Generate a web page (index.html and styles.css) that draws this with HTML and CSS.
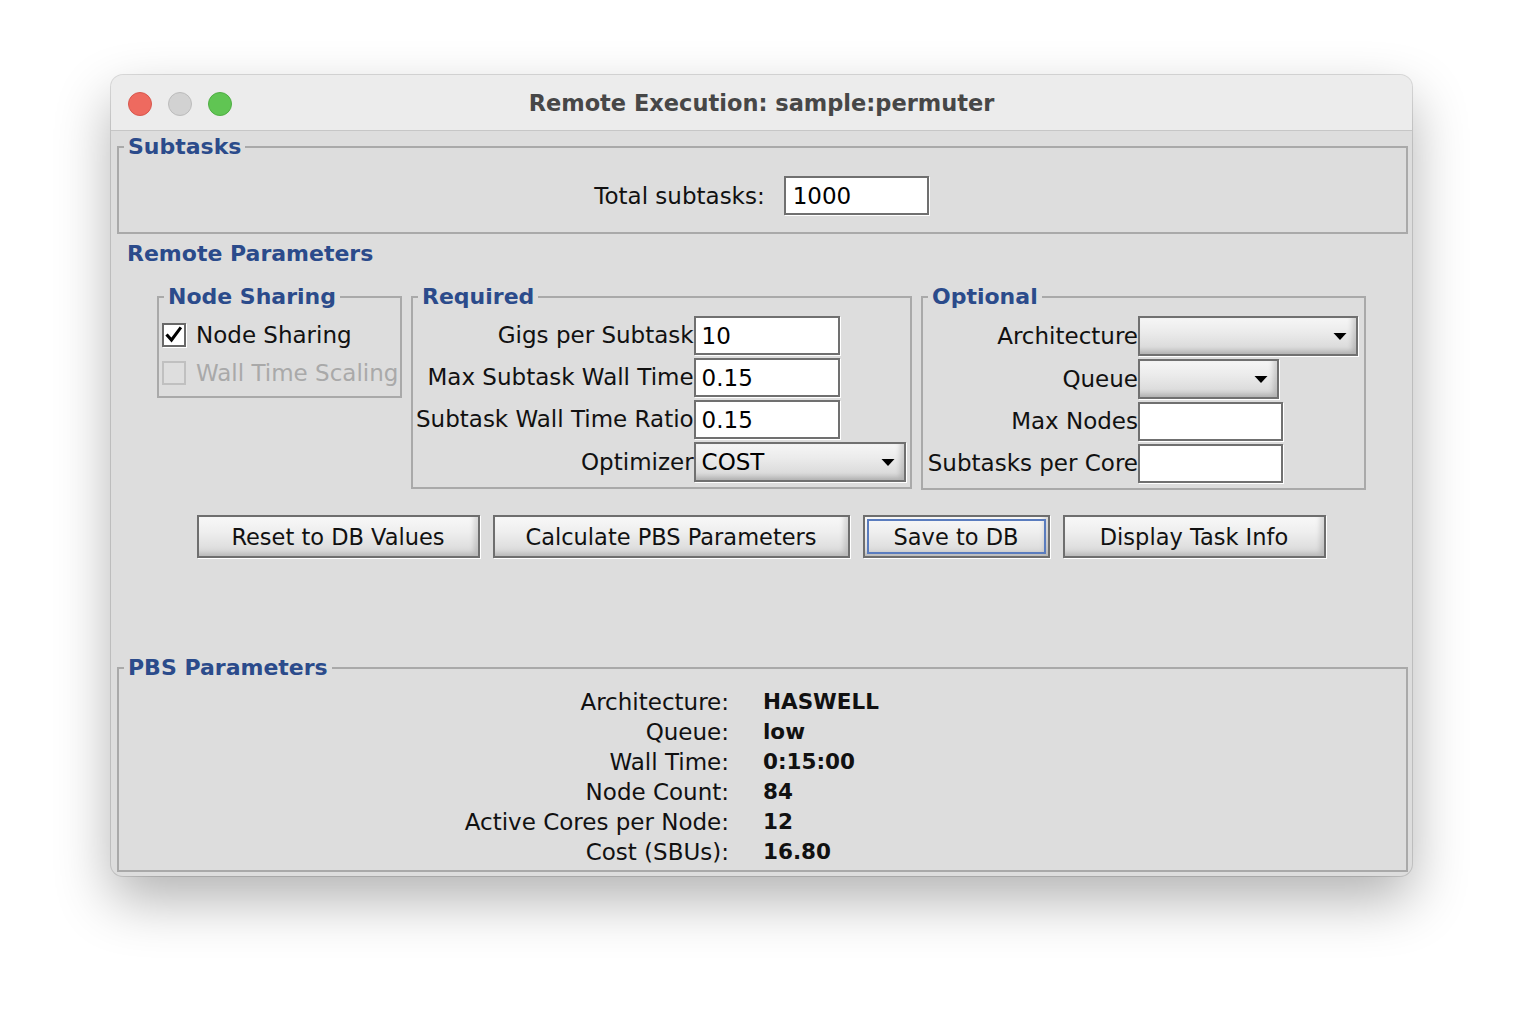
FILE: index.html
```html
<!DOCTYPE html>
<html>
<head>
<meta charset="utf-8">
<title>Remote Execution: sample:permuter</title>
<link rel="stylesheet" href="styles.css">
</head>
<body>
<div class="window">
  <div class="titlebar">
    <div class="lights">
      <span class="light red"></span>
      <span class="light gray"></span>
      <span class="light green"></span>
    </div>
    <div class="title">Remote Execution: sample:permuter</div>
    <div></div>
  </div>
  <div class="content">
    <fieldset class="group subtasks">
      <legend>Subtasks</legend>
      <div class="total-row">
        <span class="lbl">Total subtasks:</span>
        <div class="field total-field">1000</div>
      </div>
    </fieldset>

    <div class="section-title">Remote Parameters</div>

    <div class="param-row">
      <fieldset class="group inner node-sharing">
        <legend>Node Sharing</legend>
        <div class="check-row">
          <span class="cb checked">
            <svg width="20" height="20" viewBox="0 0 20 20"><path d="M3.5 10.5 L7.5 15 L16 3.5" fill="none" stroke="#000" stroke-width="3" stroke-linejoin="miter" stroke-linecap="square"/></svg>
          </span>
          <span class="lbl">Node Sharing</span>
        </div>
        <div class="check-row disabled">
          <span class="cb off"></span>
          <span class="lbl">Wall Time Scaling</span>
        </div>
      </fieldset>

      <fieldset class="group inner required">
        <legend>Required</legend>
        <div class="form-grid req-grid">
          <span class="flabel">Gigs per Subtask</span>
          <div class="field w146">10</div>
          <span class="flabel">Max Subtask Wall Time</span>
          <div class="field w146">0.15</div>
          <span class="flabel">Subtask Wall Time Ratio</span>
          <div class="field w146">0.15</div>
          <span class="flabel">Optimizer</span>
          <div class="combo w212"><span class="combo-text">COST</span><svg class="arrow" width="14" height="7" viewBox="0 0 14 7"><path d="M0.5 0 H13.5 L7 7 Z" fill="#000"/></svg></div>
        </div>
      </fieldset>

      <fieldset class="group inner optional">
        <legend>Optional</legend>
        <div class="form-grid opt-grid">
          <span class="flabel">Architecture</span>
          <div class="combo w220"><span class="combo-text"></span><svg class="arrow" width="14" height="7" viewBox="0 0 14 7"><path d="M0.5 0 H13.5 L7 7 Z" fill="#000"/></svg></div>
          <span class="flabel">Queue</span>
          <div class="combo w141"><span class="combo-text"></span><svg class="arrow" width="14" height="7" viewBox="0 0 14 7"><path d="M0.5 0 H13.5 L7 7 Z" fill="#000"/></svg></div>
          <span class="flabel">Max Nodes</span>
          <div class="field w145"></div>
          <span class="flabel">Subtasks per Core</span>
          <div class="field w145"></div>
        </div>
      </fieldset>
    </div>

    <div class="buttons">
      <button class="btn b-reset">Reset to DB Values</button>
      <button class="btn b-calc">Calculate PBS Parameters</button>
      <button class="btn b-save focused">Save to DB</button>
      <button class="btn b-info">Display Task Info</button>
    </div>

    <fieldset class="group pbs">
      <legend>PBS Parameters</legend>
      <div class="pbs-grid">
        <span class="plabel">Architecture:</span><span class="pval">HASWELL</span>
        <span class="plabel">Queue:</span><span class="pval">low</span>
        <span class="plabel">Wall Time:</span><span class="pval">0:15:00</span>
        <span class="plabel">Node Count:</span><span class="pval">84</span>
        <span class="plabel">Active Cores per Node:</span><span class="pval">12</span>
        <span class="plabel">Cost (SBUs):</span><span class="pval">16.80</span>
      </div>
    </fieldset>
  </div>
</div>
</body>
</html>
```

FILE: styles.css
```css
html, body {
  margin: 0;
  padding: 0;
  background: #ffffff;
}

body {
  min-height: 1024px;
  padding-top: 75px;
  box-sizing: border-box;
  font-family: "DejaVu Sans", "Noto Sans", sans-serif;
  color: #111;
}

.window {
  width: 1301px;
  height: 801px;
  margin: 0 0 0 111px;
  border-radius: 12px;
  overflow: hidden;
  background: #dddddd;
  box-shadow: 0 24px 55px rgba(0, 0, 0, 0.3), 0 0 0 1px rgba(0, 0, 0, 0.13);
  display: flex;
  flex-direction: column;
}

/* ---------- title bar ---------- */
.titlebar {
  height: 55px;
  flex: none;
  background: #ececec;
  border-bottom: 1px solid #c6c6c6;
  display: grid;
  grid-template-columns: 1fr auto 1fr;
  align-items: center;
}

.lights {
  display: flex;
  gap: 16px;
  padding-left: 17px;
  padding-top: 2px;
}

.light {
  width: 24px;
  height: 24px;
  border-radius: 50%;
  box-sizing: border-box;
}

.light.red {
  background: #ee6a5f;
  border: 1px solid #d8574d;
}

.light.gray {
  background: #d2d2d2;
  border: 1px solid #bcbcbc;
}

.light.green {
  background: #60c553;
  border: 1px solid #4fae43;
}

.title {
  font-weight: bold;
  font-size: 22.5px;
  color: #474747;
}

/* ---------- content ---------- */
.content {
  padding: 3px 4px 0 6px;
}

fieldset.group {
  margin: 0;
  padding: 0;
  min-width: 0;
  border: 2px solid #a9a9a9;
  box-sizing: border-box;
}

fieldset.group > legend {
  margin-left: 5px;
  padding: 0 4px;
  font-weight: bold;
  font-size: 22px;
  line-height: 26px;
  color: #2b4b8b;
}

fieldset.group.inner > legend {
  margin-left: 2px;
}

.lbl, .flabel, .plabel {
  font-size: 23px;
  color: #111;
  white-space: nowrap;
}

.field {
  height: 39px;
  box-sizing: border-box;
  border: 2px solid #707070;
  background: #ffffff;
  box-shadow: 1px 1px 0 #ffffff;
  font-size: 23px;
  padding-left: 6px;
  display: flex;
  align-items: center;
  color: #000;
}

/* subtasks */
.subtasks {
  padding: 16px 0 17px 0 !important;
}

.total-row {
  display: flex;
  justify-content: center;
  align-items: center;
  gap: 19px;
  padding-right: 2px;
}

.total-field {
  width: 145px;
  padding-left: 7px;
}

.section-title {
  margin-top: 7px;
  padding-left: 10px;
  font-weight: bold;
  font-size: 22px;
  line-height: 26px;
  color: #2b4b8b;
}

/* parameter row */
.param-row {
  margin-top: 17px;
  padding-left: 40px;
  display: flex;
  align-items: flex-start;
  gap: 9px;
}

.node-sharing {
  width: 245px;
  padding: 6px 0 4px 3px !important;
}

.check-row {
  height: 38px;
  display: flex;
  align-items: center;
  gap: 10px;
}

.cb {
  width: 24px;
  height: 24px;
  box-sizing: border-box;
  flex: none;
  display: flex;
  align-items: center;
  justify-content: center;
}

.cb.checked {
  border: 2px solid #686868;
  background: #ffffff;
  box-shadow: 1px 1px 0 #ffffff;
}

.cb.off {
  border: 2px solid #c0c0c0;
  background: #dedede;
}

.check-row.disabled .lbl {
  color: #a9a9a9;
}

.required {
  width: 501px;
  padding: 6px 6px 5px 3px !important;
}

.optional {
  width: 445px;
  padding: 6px 6px 5px 3px !important;
}

.form-grid {
  display: grid;
  row-gap: 3px;
  align-items: center;
}

.req-grid {
  grid-template-columns: 1fr 212px;
}

.opt-grid {
  grid-template-columns: 1fr 220px;
}

.flabel {
  justify-self: end;
  line-height: 39px;
}

.w146 { width: 146px; }
.w145 { width: 145px; }
.w212 { width: 212px; }
.w220 { width: 220px; }
.w141 { width: 141px; }

.combo {
  height: 40px;
  box-sizing: border-box;
  border: 2px solid #707070;
  background: linear-gradient(to bottom, #f6f6f6 0%, #ebebeb 40%, #dcdcdc 80%, #cfcfcf 100%);
  box-shadow: inset -4px -3px 5px rgba(0, 0, 0, 0.15), 1px 1px 0 #ffffff;
  display: flex;
  align-items: center;
  justify-content: space-between;
  padding: 0 9px 0 6px;
  font-size: 23px;
  color: #000;
}

.arrow {
  flex: none;
}

/* buttons */
.buttons {
  margin-top: 25px;
  display: flex;
  justify-content: center;
  gap: 13px;
  padding-right: 3px;
}

.btn {
  height: 43px;
  box-sizing: border-box;
  border: 2px solid #6e6e6e;
  border-radius: 0;
  background: linear-gradient(to bottom, #f8f8f8 0%, #eeeeee 40%, #e0e0e0 75%, #d3d3d3 100%);
  box-shadow: inset -4px -3px 5px rgba(0, 0, 0, 0.13), 1px 1px 0 #ffffff;
  font-family: "DejaVu Sans", "Noto Sans", sans-serif;
  font-size: 22.5px;
  color: #111;
  padding: 0;
  margin: 0;
}

.b-reset { width: 283px; }
.b-calc { width: 357px; }
.b-save { width: 187px; }
.b-info { width: 263px; }

.btn.focused {
  outline: 2px solid #5a7cbe;
  outline-offset: -6px;
}

/* pbs */
.pbs {
  margin-top: 97px !important;
  padding: 6px 0 3px 0 !important;
}

.pbs-grid {
  display: grid;
  grid-template-columns: 610px auto;
  column-gap: 34px;
}

.plabel {
  text-align: right;
  line-height: 30px;
}

.pval {
  font-weight: bold;
  font-size: 21.5px;
  line-height: 30px;
  color: #111;
}
```
